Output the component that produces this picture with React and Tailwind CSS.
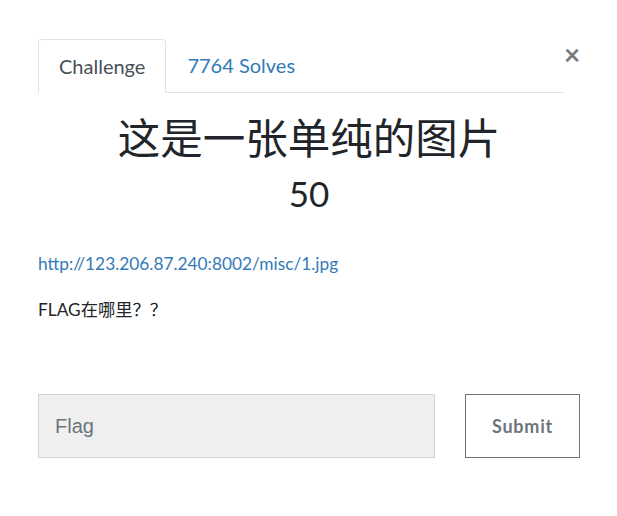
export default function App() {
  return (
    <div className="min-h-screen bg-white pl-[38px] pr-[37px] pt-[39px] text-[#212529]" style={{ fontFamily: "Lato, 'Noto Sans CJK SC', sans-serif" }}>
      {/* Tabs + close */}
      <div className="flex items-start">
        <nav className="flex flex-1 border-b border-[#dee2e6]">
          <div className="-mb-px rounded-t-[4px] border border-b-white border-[#dee2e6] bg-white px-5 pt-[12px] pb-[12px] text-[20px] leading-[28px] text-[#495057]">
            Challenge
          </div>
          <div className="px-[21px] pt-[12px] pb-[12px] text-[20px] leading-[28px] text-[#337ab7]">
            7764 Solves
          </div>
        </nav>
        <button className="mt-[1px] w-4 text-[28px] leading-[28px] font-bold text-[#7a7a7a]">
          ×
        </button>
      </div>

      {/* Title */}
      <h2 className="mt-[19px] text-center text-[42.5px] leading-[52px] text-[#212529]">
        这是一张单纯的图片
      </h2>
      <h3 className="mt-[7px] text-center text-[35px] leading-[44px] text-[#212529]">50</h3>

      {/* Description */}
      <div className="mt-[37px] text-[17.3px] leading-[24px]">
        <a href="#" className="text-[#337ab7]">http://123.206.87.240:8002/misc/1.jpg</a>
        <p className="mt-[22px]">FLAG在哪里？？</p>
      </div>

      {/* Submit row */}
      <div className="mt-[72px] flex gap-[30px]">
        <input
          placeholder="Flag"
          className="h-[64px] flex-1 border border-[#ced4da] bg-[#efefef] px-4 text-[20px] text-[#495057] placeholder:text-[#6c757d] outline-none"
          style={{ fontFamily: "'Liberation Sans', Arial, sans-serif" }}
        />
        <button className="h-[64px] w-[115px] border border-[#6c757d] bg-white text-[18px] font-bold tracking-[0.8px] text-[#6c757d]">
          Submit
        </button>
      </div>
    </div>
  );
}
